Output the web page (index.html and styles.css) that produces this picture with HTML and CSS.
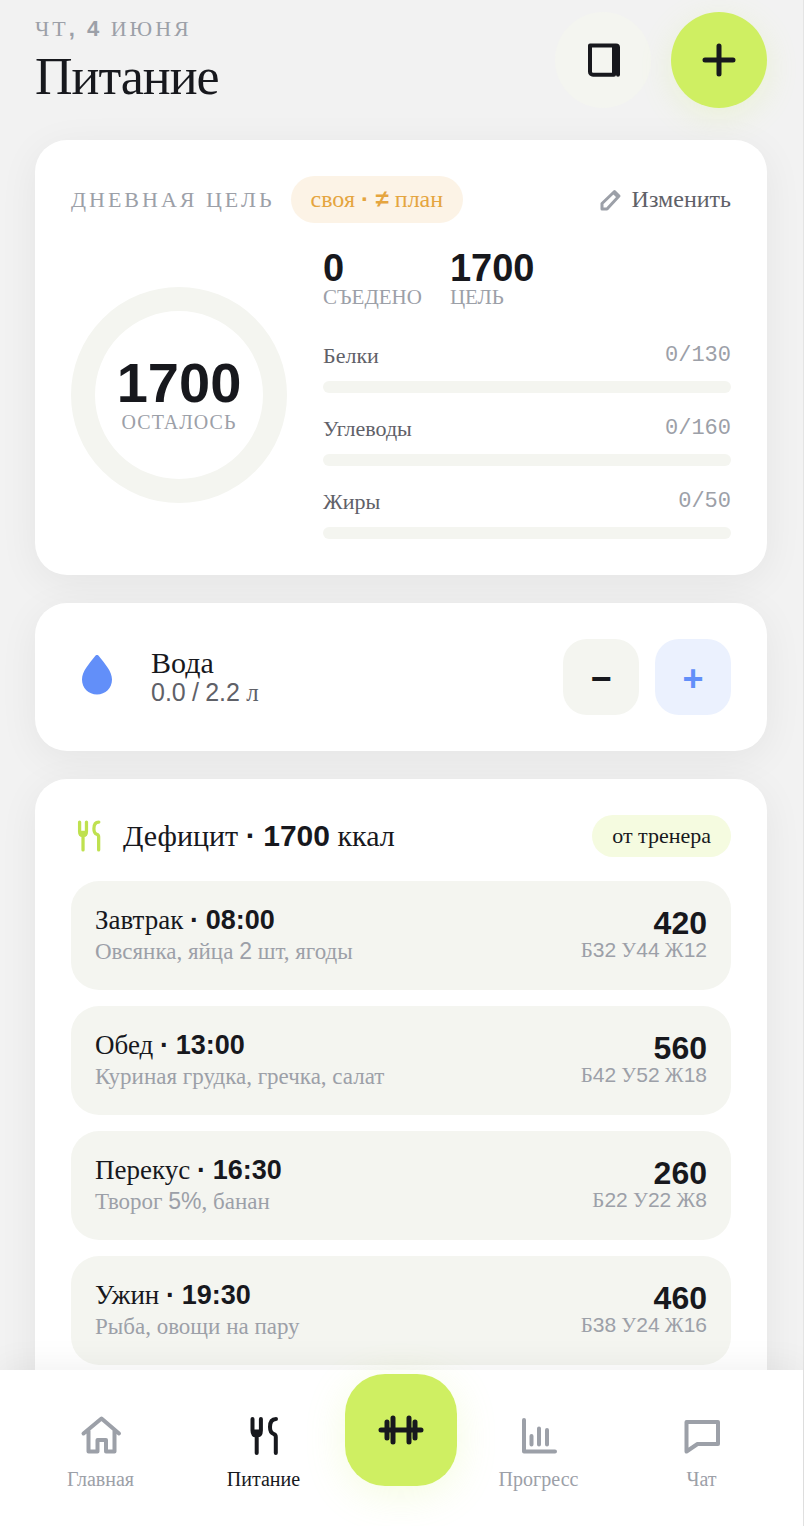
FILE: index.html
```html
<!DOCTYPE html>
<html lang="ru">
<head>
  <meta charset="utf-8">
  <meta name="viewport" content="width=device-width, initial-scale=1">
  <title>Питание</title>
  <link rel="stylesheet" href="styles.css">
</head>
<body>
  <svg class="sprite" aria-hidden="true">
    <symbol id="icon-food" viewBox="0.500 0 44 44">
      <path d="M11 5v11.500c0 3.500 1.500 5 4.200 5s4.200-1.500 4.200-5V5M15.200 18v21M34.500 5C30 5 28.500 8.500 28.500 13c0 4 1 6 3.500 6.800 2 .6 2.300 1.200 2.300 3.200v16"/>
      <path d="M12.500 17.500h5.400v3h-5.400z"/>
    </symbol>
  </svg>

  <div class="screen">
    <main class="content">
      <header class="header">
        <div class="header-text">
          <p class="date">ЧТ<b class="num">, 4</b> ИЮНЯ</p>
          <h1>Питание</h1>
        </div>
        <div class="header-actions">
          <button type="button" class="btn-round" aria-label="Дневник">
            <svg width="40" height="40" viewBox="0 0 40 40">
              <path d="M7 5.500h24v29.300H10a3 3 0 0 1-3-3zM31 5.500h2a2 2 0 0 1 2 2v27.200M33 8v25"/>
            </svg>
          </button>
          <button type="button" class="btn-round btn-accent" aria-label="Добавить">
            <svg class="stroke-bold" width="40" height="40" viewBox="0 0 40 40">
              <path d="M20 6v28M6 20h28"/>
            </svg>
          </button>
        </div>
      </header>

      <section class="card">
        <div class="goal-head">
          <h2 class="caption">ДНЕВНАЯ ЦЕЛЬ</h2>
          <span class="pill pill-warn">своя <b class="num">· ≠</b> план</span>
          <button type="button" class="btn-edit">
            <svg class="stroke-thin" width="22" height="22" viewBox="0 0 22 22">
              <path d="M2 20v-5.500L14.500 2.500 19 7 7 20zM14 4l3.500 3.500"/>
            </svg>
            Изменить
          </button>
        </div>
        <div class="goal-body">
          <div class="ring">
            <div class="ring-value num">1700</div>
            <div class="ring-label">ОСТАЛОСЬ</div>
          </div>
          <div class="goal-info">
            <div class="stats">
              <div>
                <div class="stat-value num">0</div>
                <div class="stat-label">СЪЕДЕНО</div>
              </div>
              <div>
                <div class="stat-value num">1700</div>
                <div class="stat-label">ЦЕЛЬ</div>
              </div>
            </div>
            <div class="macros">
              <div class="macro">
                <div class="macro-row"><span>Белки</span><span class="macro-value">0/130</span></div>
                <div class="bar"></div>
              </div>
              <div class="macro">
                <div class="macro-row"><span>Углеводы</span><span class="macro-value">0/160</span></div>
                <div class="bar"></div>
              </div>
              <div class="macro">
                <div class="macro-row"><span>Жиры</span><span class="macro-value">0/50</span></div>
                <div class="bar"></div>
              </div>
            </div>
          </div>
        </div>
      </section>

      <section class="card water">
        <svg class="water-icon" width="52" height="52" viewBox="0 0 52 52">
          <path d="M26 4c1 0 1.600.6 2.200 1.400C34 13 41 20 41 28.500 41 37 34.500 43.500 26 43.500S11 37 11 28.500C11 20 18 13 23.800 5.400 24.400 4.600 25 4 26 4z"/>
        </svg>
        <div class="water-text">
          <h2>Вода</h2>
          <p><span class="num">0.0</span> <span class="num">/</span> <span class="num">2.2</span> л</p>
        </div>
        <button type="button" class="btn-step num" aria-label="Меньше">−</button>
        <button type="button" class="btn-step btn-step-plus num" aria-label="Больше">+</button>
      </section>

      <section class="card">
        <div class="plan-head">
          <svg class="plan-icon" width="36" height="36"><use href="#icon-food"/></svg>
          <h2>Дефицит <b class="num">·</b> <b class="num">1700</b> ккал</h2>
          <span class="pill pill-accent">от тренера</span>
        </div>
        <ul class="meals">
          <li class="meal">
            <div>
              <h3>Завтрак <b class="num">·</b> <b class="num">08:00</b></h3>
              <p>Овсянка, яйца <span class="num">2</span> шт, ягоды</p>
            </div>
            <div class="meal-total">
              <div class="meal-kcal num">420</div>
              <div class="meal-macros">Б<span class="num">32</span> У<span class="num">44</span> Ж<span class="num">12</span></div>
            </div>
          </li>
          <li class="meal">
            <div>
              <h3>Обед <b class="num">·</b> <b class="num">13:00</b></h3>
              <p>Куриная грудка, гречка, салат</p>
            </div>
            <div class="meal-total">
              <div class="meal-kcal num">560</div>
              <div class="meal-macros">Б<span class="num">42</span> У<span class="num">52</span> Ж<span class="num">18</span></div>
            </div>
          </li>
          <li class="meal">
            <div>
              <h3>Перекус <b class="num">·</b> <b class="num">16:30</b></h3>
              <p>Творог <span class="num">5%</span>, банан</p>
            </div>
            <div class="meal-total">
              <div class="meal-kcal num">260</div>
              <div class="meal-macros">Б<span class="num">22</span> У<span class="num">22</span> Ж<span class="num">8</span></div>
            </div>
          </li>
          <li class="meal">
            <div>
              <h3>Ужин <b class="num">·</b> <b class="num">19:30</b></h3>
              <p>Рыба, овощи на пару</p>
            </div>
            <div class="meal-total">
              <div class="meal-kcal num">460</div>
              <div class="meal-macros">Б<span class="num">38</span> У<span class="num">24</span> Ж<span class="num">16</span></div>
            </div>
          </li>
        </ul>
      </section>
    </main>

    <nav class="tabbar">
      <a href="#" class="tab">
        <svg width="44" height="44" viewBox="0 0 44 44">
          <path d="M4.500 19.500l18-15 17.500 15M9.500 17v20.500h9V26h8.500v10.500m0 1h8.500V17"/>
        </svg>
        Главная
      </a>
      <a href="#" class="tab active">
        <svg width="44" height="44"><use href="#icon-food"/></svg>
        Питание
      </a>
      <button type="button" class="tab-main" aria-label="Тренировка">
        <svg class="stroke-bold" width="48" height="48" viewBox="0 0 48 48">
          <path d="M4 24h40M16 12v24M32 12v24M10 16v16M38 16v16"/>
        </svg>
      </button>
      <a href="#" class="tab">
        <svg width="44" height="44" viewBox="0 0 44 44">
          <path d="M7 6v31.500h31M14.500 22v8.500M22 14.500v16M30 16v14.500"/>
        </svg>
        Прогресс
      </a>
      <a href="#" class="tab">
        <svg width="44" height="44" viewBox="0 0 44 44">
          <path d="M6.500 8H38v22H17.500l-11 7.500z"/>
        </svg>
        Чат
      </a>
    </nav>
  </div>
</body>
</html>
```

FILE: styles.css
```css
:root {
  --bg: #f2f2f2;
  --soft: #f4f5f0;
  --ink: #17181d;
  --text: #5f6168;
  --muted: #9ca0a8;
  --accent: #cfef62;
  --blue: #628ff9;
  --serif: "Liberation Serif", "Times New Roman", serif;
  --sans: "Liberation Sans", Arial, sans-serif;
}

* {
  box-sizing: border-box;
}

body {
  margin: 0;
  background: var(--bg);
  color: var(--ink);
  font-family: var(--serif);
  font-size: 22px;
}

h1, h2, h3, p, ul {
  margin: 0;
  padding: 0;
  font-weight: 400;
}

button {
  padding: 0;
  border: none;
  background: none;
  color: inherit;
  font: inherit;
  cursor: pointer;
}

svg {
  display: block;
  flex: none;
  fill: none;
  stroke: currentColor;
  stroke-width: 4;
  stroke-linecap: round;
  stroke-linejoin: round;
}

.stroke-thin {
  stroke-width: 3;
}

.stroke-bold {
  stroke-width: 5;
}

.sprite {
  position: absolute;
  width: 0;
  height: 0;
}

.num {
  font-family: var(--sans);
  line-height: 1;
}

.screen {
  display: flex;
  flex-direction: column;
  height: 100vh;
  border-right: 1px solid #e4e4e4;
}

.content {
  flex: 1;
  min-height: 0;
  display: flex;
  flex-direction: column;
  gap: 28px;
  padding: 12px 36px 36px 35px;
  overflow-y: auto;
  scrollbar-width: none;
}

/* header */
.header {
  display: flex;
  flex: none;
  justify-content: space-between;
  align-items: flex-start;
  height: 100px;
}

.date {
  color: var(--muted);
  letter-spacing: 3px;
  line-height: 33px;
}

h1 {
  font-size: 52px;
  line-height: 64px;
  letter-spacing: -1px;
}

.header-actions {
  display: flex;
  gap: 20px;
}

.btn-round {
  display: flex;
  align-items: center;
  justify-content: center;
  width: 96px;
  height: 96px;
  border-radius: 50%;
  background: var(--soft);
}

.btn-accent {
  background: var(--accent);
  box-shadow: 0 8px 32px rgba(207, 239, 98, 0.2);
}

/* cards */
.card {
  flex: none;
  padding: 36px;
  border-radius: 32px;
  background: #fff;
  box-shadow: 0 8px 40px rgba(0, 0, 0, 0.06);
}

.pill {
  padding: 0 20px;
  border-radius: 24px;
  white-space: nowrap;
}

.pill-warn {
  background: #fcf3e6;
  color: #e5a53f;
  font-size: 24px;
  line-height: 47px;
}

.pill-accent {
  background: #f5fbe0;
  line-height: 42px;
}

/* daily goal */
.goal-head {
  display: flex;
  align-items: center;
  gap: 16px;
  margin-bottom: 28px;
}

.caption {
  color: var(--muted);
  font-size: 22px;
  letter-spacing: 3px;
}

.btn-edit {
  display: flex;
  align-items: center;
  gap: 10px;
  margin-left: auto;
  color: var(--text);
  font-size: 24px;
}

.btn-edit svg {
  color: var(--muted);
}

.goal-body {
  display: flex;
  align-items: center;
  gap: 36px;
}

.ring {
  display: flex;
  flex: none;
  flex-direction: column;
  align-items: center;
  justify-content: center;
  width: 216px;
  height: 216px;
  border: 24px solid var(--soft);
  border-radius: 50%;
}

.ring-value {
  font-size: 56px;
  font-weight: 700;
  line-height: 54px;
}

.ring-label {
  color: var(--muted);
  font-size: 20px;
  letter-spacing: 1px;
  line-height: 24px;
}

.goal-info {
  flex: 1;
}

.stats {
  display: flex;
  gap: 28px;
  margin-bottom: 35px;
}

.stat-value {
  font-size: 38px;
  font-weight: 700;
  line-height: 34px;
}

.stat-label {
  color: var(--muted);
  font-size: 21px;
  line-height: 24px;
}

.macros {
  display: flex;
  flex-direction: column;
  gap: 24px;
}

.macro-row {
  display: flex;
  justify-content: space-between;
  margin-bottom: 13px;
  color: var(--text);
  line-height: 24px;
}

.macro-value {
  color: var(--muted);
  font-family: "Liberation Mono", monospace;
}

.bar {
  height: 12px;
  border-radius: 6px;
  background: var(--soft);
}

/* water */
.water {
  display: flex;
  align-items: center;
  gap: 16px;
}

.water-icon {
  fill: var(--blue);
  stroke: none;
}

.water-text {
  flex: 1;
  padding-left: 12px;
}

.water h2 {
  font-size: 30px;
  line-height: 32px;
}

.water p {
  color: var(--text);
  font-size: 25px;
  line-height: 28px;
}

.btn-step {
  width: 76px;
  height: 76px;
  padding-top: 4px;
  border-radius: 24px;
  background: var(--soft);
  font-size: 36px;
  font-weight: 700;
}

.btn-step-plus {
  background: #ebf1fe;
  color: var(--blue);
}

/* meal plan */
.plan-head {
  display: flex;
  align-items: center;
  gap: 16px;
  margin-bottom: 24px;
}

.plan-head h2 {
  flex: 1;
  font-size: 30px;
}

.plan-icon {
  color: #bfe14f;
}

.meals {
  display: flex;
  flex-direction: column;
  gap: 16px;
  list-style: none;
}

.meal {
  display: flex;
  align-items: center;
  justify-content: space-between;
  padding: 23px 24px;
  border-radius: 28px;
  background: var(--soft);
}

.meal h3 {
  font-size: 27px;
  line-height: 33px;
}

.meal p {
  color: var(--muted);
  font-size: 23px;
  line-height: 30px;
}

.meal-total {
  text-align: right;
}

.meal-kcal {
  font-size: 32px;
  font-weight: 700;
  line-height: 28px;
}

.meal-macros {
  color: var(--muted);
  font-size: 21px;
  line-height: 26px;
}

/* bottom navigation */
.tabbar {
  position: relative;
  display: flex;
  flex: none;
  align-items: flex-start;
  height: 156px;
  padding: 4px 20px 0 19px;
  background: #fff;
  box-shadow: 0 -4px 32px rgba(0, 0, 0, 0.06);
}

.tab {
  display: flex;
  flex: 1;
  flex-direction: column;
  align-items: center;
  gap: 8px;
  padding-top: 40px;
  color: var(--muted);
  font-size: 20px;
  line-height: 26px;
  text-decoration: none;
}

.tab.active {
  color: var(--ink);
}

.tab-main {
  display: flex;
  align-items: center;
  justify-content: center;
  width: 112px;
  height: 112px;
  border-radius: 40px;
  background: var(--accent);
  box-shadow: 0 8px 40px rgba(207, 239, 98, 0.2);
}
```
